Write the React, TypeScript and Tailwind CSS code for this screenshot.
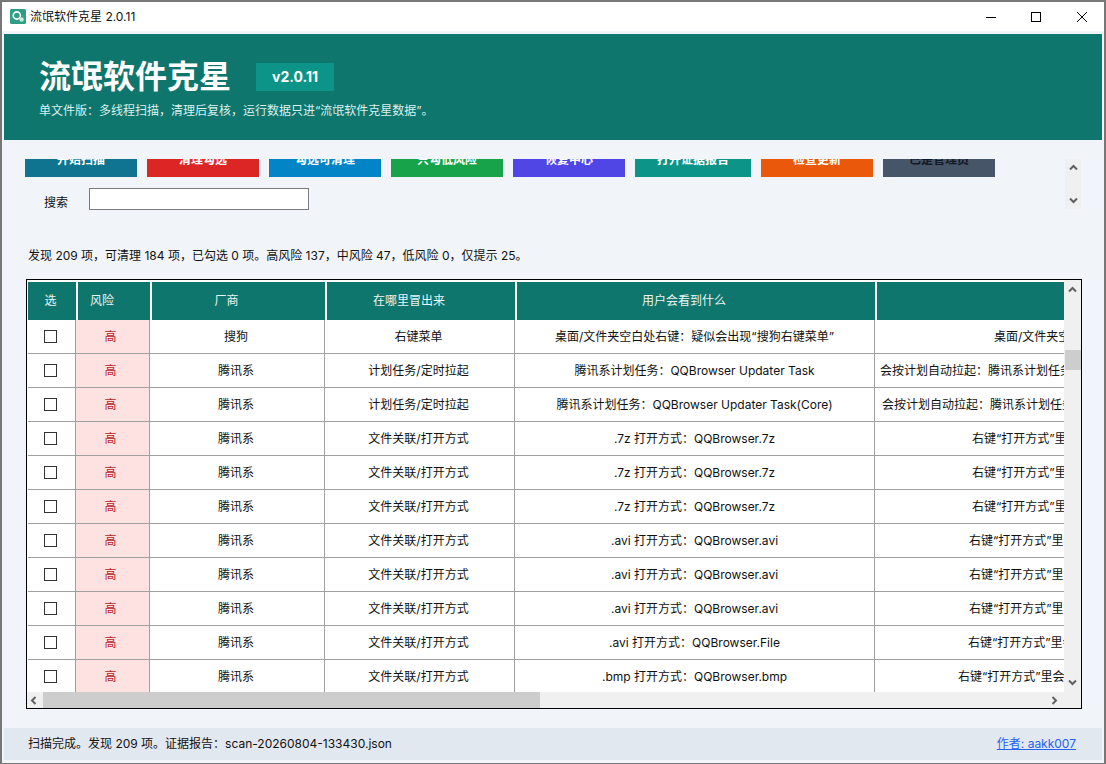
import React from 'react';

const FONT = "font-['Inter','Noto_Sans_CJK_SC',sans-serif]";

const buttons = [
  { label: '开始扫描', className: 'w-[112px] bg-[#0e7490] text-white' },
  { label: '清理勾选', className: 'w-[112px] bg-[#dc2626] text-white' },
  { label: '勾选可清理', className: 'w-[112px] bg-[#0284c7] text-white' },
  { label: '只勾低风险', className: 'w-[112px] bg-[#16a34a] text-white' },
  { label: '恢复中心', className: 'w-[112px] bg-[#4f46e5] text-white' },
  { label: '打开证据报告', className: 'w-[116px] bg-[#0d9488] text-white' },
  { label: '检查更新', className: 'w-[112px] bg-[#ea580c] text-white' },
  { label: '已是管理员', className: 'w-[112px] bg-[#475569] text-[#111827]' },
];

const columns = [
  { label: '选', className: 'w-[48px] pr-[3px]' },
  { label: '风险', className: 'w-[74px] border-l-2 border-white pr-6' },
  { label: '厂商', className: 'w-[175px] border-l-2 border-white pr-6' },
  { label: '在哪里冒出来', className: 'w-[190px] border-l-2 border-white pr-6' },
  { label: '用户会看到什么', className: 'w-[360px] border-l-2 border-white pr-6' },
  { label: '', className: 'w-[600px] border-l-2 border-white' },
];

const openWith = '文件关联/打开方式';
const rightKey = '右键“打开方式”里会出现对应的默认打开程序';

const rows = [
  { vendor: '搜狗', where: '右键菜单', what: '桌面/文件夹空白处右键：疑似会出现“搜狗右键菜单”', effect: '桌面/文件夹空白处右键会出现对应菜单', pad: 'pl-[119px]' },
  { vendor: '腾讯系', where: '计划任务/定时拉起', what: '腾讯系计划任务：QQBrowser Updater Task', effect: '会按计划自动拉起：腾讯系计划任务 QQBrowser Updater Task', pad: 'pl-[5px]' },
  { vendor: '腾讯系', where: '计划任务/定时拉起', what: '腾讯系计划任务：QQBrowser Updater Task(Core)', effect: '会按计划自动拉起：腾讯系计划任务 QQBrowser Updater Task(Core)', pad: 'pl-[7px]' },
  { vendor: '腾讯系', where: openWith, what: '.7z 打开方式：QQBrowser.7z', effect: rightKey, pad: 'pl-[97px]' },
  { vendor: '腾讯系', where: openWith, what: '.7z 打开方式：QQBrowser.7z', effect: rightKey, pad: 'pl-[97px]' },
  { vendor: '腾讯系', where: openWith, what: '.7z 打开方式：QQBrowser.7z', effect: rightKey, pad: 'pl-[97px]' },
  { vendor: '腾讯系', where: openWith, what: '.avi 打开方式：QQBrowser.avi', effect: rightKey, pad: 'pl-[94px]' },
  { vendor: '腾讯系', where: openWith, what: '.avi 打开方式：QQBrowser.avi', effect: rightKey, pad: 'pl-[94px]' },
  { vendor: '腾讯系', where: openWith, what: '.avi 打开方式：QQBrowser.avi', effect: rightKey, pad: 'pl-[94px]' },
  { vendor: '腾讯系', where: openWith, what: '.avi 打开方式：QQBrowser.File', effect: rightKey, pad: 'pl-[93px]' },
  { vendor: '腾讯系', where: openWith, what: '.bmp 打开方式：QQBrowser.bmp', effect: rightKey, pad: 'pl-[83px]' },
];

const Arrow: React.FC<{ d: string }> = ({ d }) => (
  <svg width="9" height="9" viewBox="0 0 9 9" fill="none" stroke="#606060" strokeWidth="2">
    <path d={d} />
  </svg>
);

const UP = 'M1 6.5 L4.5 3 L8 6.5';
const DOWN = 'M1 2.5 L4.5 6 L8 2.5';
const LEFT = 'M6.5 1 L3 4.5 L6.5 8';
const RIGHT = 'M2.5 1 L6 4.5 L2.5 8';

export default function App() {
  return (
    <div className={`${FONT} flex h-[764px] w-[1106px] flex-col overflow-hidden border-x-2 border-t-2 border-b border-[#777777] bg-[#f1f5f9] text-xs text-[#111111]`}>
      {/* title bar */}
      <div className="flex h-[29px] shrink-0 items-center bg-white">
        <svg className="ml-2 shrink-0" width="16" height="15" viewBox="0 0 16 15" fill="none">
          <rect width="16" height="15" rx="1.5" fill="#2f9e82" />
          <circle cx="6.8" cy="6.5" r="3.6" stroke="#fff" strokeWidth="1.6" />
          <circle cx="11.6" cy="10.5" r="2.2" fill="#cfe9e1" />
        </svg>
        <span className="ml-1 text-xs">流氓软件克星 2.0.11</span>
        <div className="ml-auto flex items-center">
          <svg width="12" height="12" viewBox="0 0 12 12" stroke="#000" fill="none" className="mr-[33px]">
            <path d="M1 6.5 H11" />
          </svg>
          <svg width="12" height="12" viewBox="0 0 12 12" stroke="#000" fill="none" className="mr-[34px]">
            <rect x="1.5" y="1.5" width="9" height="9" />
          </svg>
          <svg width="12" height="12" viewBox="0 0 12 12" stroke="#000" fill="none" className="mr-[16px]">
            <path d="M1 1 L11 11 M11 1 L1 11" />
          </svg>
        </div>
      </div>

      {/* banner */}
      <div className="mx-[2px] mt-[3px] flex h-[106px] shrink-0 flex-col bg-[#0f766e] pl-[35px] pt-[22px] text-white">
        <div className="flex items-center">
          <h1 className="text-[32px] leading-[42px] font-bold">流氓软件克星</h1>
          <span className="ml-[25px] flex h-[28px] w-[78px] items-center justify-center bg-[#0d9488] text-sm font-bold">v2.0.11</span>
        </div>
        <p className="mt-[5px] text-xs text-[#d9f0ec]">单文件版：多线程扫描，清理后复核，运行数据只进“流氓软件克星数据”。</p>
      </div>

      {/* toolbar */}
      <div className="mt-[19px] flex h-[50px] shrink-0 pl-[23px]">
        <div className="w-[1040px]">
          <div className="h-[18px] overflow-hidden">
            <div className="-mt-[18px] flex gap-[10px]">
              {buttons.map((b) => (
                <div key={b.label} className={`flex h-[36px] shrink-0 items-center justify-center pt-[2px] text-xs font-semibold ${b.className}`}>
                  {b.label}
                </div>
              ))}
            </div>
          </div>
          <div className="mt-[10px] flex items-center">
            <span className="ml-[19px] mt-[8px] text-xs">搜索</span>
            <div className="ml-[21px] h-[22px] w-[220px] border border-[#7a7a7a] bg-white" />
          </div>
        </div>
        <div className="flex h-[50px] w-[16px] flex-col items-center justify-between bg-[#f0f0f0] py-[4px]">
          <Arrow d={UP} />
          <Arrow d={DOWN} />
        </div>
      </div>

      <div className="mt-[37px] h-[20px] shrink-0 pl-[26px] leading-[20px]">
        发现 209 项，可清理 184 项，已勾选 0 项。高风险 137，中风险 47，低风险 0，仅提示 25。
      </div>

      {/* table frame */}
      <div className="ml-[24px] mt-[13px] flex h-[430px] w-[1056px] shrink-0 flex-col border border-black bg-white">
        <div className="flex h-[412px]">
          <div className="h-[412px] w-[1037px] overflow-hidden pl-px pt-[2px]">
            <table className="w-[1447px] table-fixed border-separate border-spacing-0 text-center">
              <thead>
                <tr className="h-[38px] bg-[#0f766e] text-[#e8f5f2]">
                  {columns.map((c, i) => (
                    <th key={i} className={`p-0 text-xs font-normal ${c.className}`}>
                      {c.label}
                    </th>
                  ))}
                </tr>
              </thead>
              <tbody>
                {rows.map((r, i) => (
                  <tr key={i} className="h-[34px]">
                    <td className="border-r border-b border-[#a0a0a0] p-0">
                      <div className="ml-[16px] h-[13px] w-[13px] border border-[#333333] bg-white" />
                    </td>
                    <td className="border-r border-b border-[#a0a0a0] bg-[#fee2e2] p-0 pr-[4px] text-[#b91c1c]">高</td>
                    <td className="border-r border-b border-[#a0a0a0] p-0 pr-[2px]">{r.vendor}</td>
                    <td className="border-r border-b border-[#a0a0a0] p-0 pr-[2px]">{r.where}</td>
                    <td className="border-r border-b border-[#a0a0a0] p-0">{r.what}</td>
                    <td className={`overflow-hidden border-b border-[#a0a0a0] p-0 text-left whitespace-nowrap ${r.pad}`}>{r.effect}</td>
                  </tr>
                ))}
              </tbody>
            </table>
          </div>
          <div className="flex w-[17px] flex-col items-center bg-[#f0f0f0]">
            <div className="mt-[5px]">
              <Arrow d={UP} />
            </div>
            <div className="mt-[56px] h-[20px] w-[16px] shrink-0 bg-[#cdcdcd]" />
            <div className="mt-auto mb-[5px]">
              <Arrow d={DOWN} />
            </div>
          </div>
        </div>
        <div className="flex h-[16px] items-center bg-[#f0f0f0]">
          <div className="ml-[2px] w-[14px]">
            <Arrow d={LEFT} />
          </div>
          <div className="h-full w-[497px] bg-[#cdcdcd]" />
          <div className="ml-[510px]">
            <Arrow d={RIGHT} />
          </div>
        </div>
      </div>

      {/* status bar */}
      <div className="mx-[2px] mt-[19px] flex h-[32px] shrink-0 items-center justify-between bg-[#e2e8f0] pl-[24px] pr-[26px]">
        <span>扫描完成。发现 209 项。证据报告：scan-20260804-133430.json</span>
        <a className="text-[#2563eb] underline">作者: aakk007</a>
      </div>
    </div>
  );
}
